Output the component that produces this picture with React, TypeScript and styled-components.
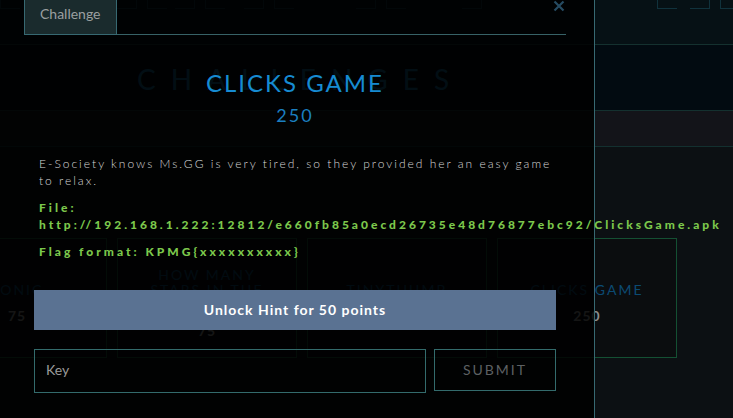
import React from 'react';
import styled, { createGlobalStyle } from 'styled-components';

const GlobalStyle = createGlobalStyle`
  * { box-sizing: border-box; }
  body {
    margin: 0;
    background: #0c1013;
    font-family: Lato, "Liberation Sans", sans-serif;
    overflow: hidden;
  }
`;

const Screen = styled.div`
  position: relative;
  min-height: 100vh;
  overflow: hidden;
`;

const Header = styled.header`
  height: 45px;
  background: #061115;
  border-bottom: 1px solid #14312f;
`;

const Nav = styled.nav`
  display: flex;
  gap: 10px;
  height: 9px;
`;

const NavFrame = styled.span<{ $width: number; $push?: boolean }>`
  flex: 0 0 ${p => p.$width}px;
  margin-left: ${p => (p.$push ? 'auto' : '0')};
  border: solid #10323c;
  border-width: 0 1px;
  background:
    linear-gradient(#10323c, #10323c) left bottom / 19px 1px no-repeat,
    linear-gradient(#10323c, #10323c) right bottom / 19px 1px no-repeat;
`;

const NavEnd = styled(NavFrame)`
  margin-right: -40px;
`;

const TitleBand = styled.div`
  display: flex;
  height: 66px;
  align-items: center;
  padding: 3px 0 0 137px;
  background: #020b11;
  border-bottom: 1px solid #14312f;
`;

const PageTitle = styled.h1`
  margin: 0;
  color: #126088;
  font-size: 28px;
  font-weight: 400;
  line-height: 32px;
  letter-spacing: 15px;
`;

const Strip = styled.div`
  height: 36px;
  background: #131419;
  border-bottom: 1px solid #13302f;
`;

const Cards = styled.main`
  display: grid;
  grid-template-columns: repeat(4, 180px);
  gap: 10px;
  justify-content: end;
  padding: 91px 56px 60px 0;
`;

const Card = styled.article`
  display: flex;
  height: 120px;
  flex-direction: column;
  align-items: center;
  justify-content: center;
  gap: 10px;
  padding: 10px 20px 0;
  border: 1px solid #145033;
  background: #0b0d0f;
  text-align: center;
`;

const CardName = styled.h3`
  margin: 0;
  color: #0b4a72;
  font-size: 14px;
  font-weight: 400;
  line-height: 15px;
  letter-spacing: 2px;
  white-space: pre-line;
`;

const CardPoints = styled.strong`
  min-height: 17px;
  color: #8a8c8d;
  font-size: 14px;
  line-height: 17px;
  letter-spacing: 1px;
`;

const Dialog = styled.section`
  position: absolute;
  inset: 0 138px 0 0;
  padding: 0 38px 0 34px;
  border-right: 1px solid #376972;
  background: rgba(0, 0, 0, 0.85);
`;

const TabBar = styled.div`
  display: flex;
  height: 35px;
  margin: 0 -10px;
  border-bottom: 1px solid #376267;
`;

const Tab = styled.button`
  height: 35px;
  padding: 0 15px 6px;
  border: solid #376972;
  border-width: 0 1px 1px;
  background: #1a2b2d;
  color: #9a9fa0;
  font: 14px/20px Lato, sans-serif;
`;

const Close = styled.button`
  position: absolute;
  top: 0;
  right: 28px;
  display: flex;
  width: 14px;
  height: 12px;
  align-items: center;
  justify-content: center;
  padding: 0;
  border: 0;
  background: none;
`;

const Name = styled.h2`
  margin: 33px 0 0;
  color: #168bd2;
  font-size: 24px;
  font-weight: 400;
  line-height: 30px;
  letter-spacing: 2px;
  text-align: center;
`;

const Value = styled.h4`
  margin: 6px 0 0;
  color: #1b7fc0;
  font-size: 18px;
  font-weight: 400;
  line-height: 22px;
  letter-spacing: 2px;
  text-align: center;
`;

const Description = styled.div`
  margin: 29px 0 0 5px;
  color: #d8d8d8;
  font-size: 12px;
  font-weight: 300;
  line-height: 17px;
  letter-spacing: 2px;
`;

const Paragraph = styled.p`
  margin: 0 0 10px;
`;

const Download = styled.a`
  color: #7cc84c;
  font-weight: 900;
  letter-spacing: 3px;
  text-decoration: none;
  white-space: nowrap;
`;

const Flag = styled.strong`
  color: #7cc84c;
  font-weight: 900;
  letter-spacing: 3px;
`;

const Hint = styled.button`
  width: 100%;
  height: 40px;
  margin-top: 20px;
  border: 0;
  background: #5a7292;
  color: #fff;
  font: 700 14px/20px Lato, sans-serif;
  letter-spacing: 1px;
`;

const Form = styled.form`
  display: flex;
  gap: 8px;
  align-items: flex-start;
  margin-top: 19px;
`;

const KeyInput = styled.input`
  flex: 1;
  min-width: 0;
  height: 44px;
  padding: 0 11px 3px;
  border: 1px solid #336b6c;
  background: transparent;
  color: #9a9a9a;
  font: 14px/20px Lato, sans-serif;
  &::placeholder { color: #9a9a9a; opacity: 1; }
`;

const Submit = styled.button`
  width: 122px;
  height: 42px;
  border: 1px solid #336b6c;
  background: transparent;
  color: #5d6062;
  font: 14px/20px Lato, sans-serif;
  letter-spacing: 2px;
`;

const cards = [
  { name: 'SONIC', points: '75' },
  { name: 'HOW MANY\nSTARS IN THE\n\u00a0', points: '75' },
  { name: 'TINYTHUMB', points: '' },
  { name: 'CLICKS GAME', points: '250' },
];

export default function App() {
  return (
    <>
      <GlobalStyle />
      <Screen>
        <Header>
          <Nav aria-label="Main">
            <NavFrame $width={137} />
            <NavFrame $width={48} />
            <NavFrame $width={59} />
            <NavFrame $width={102} />
            <NavFrame $width={96} />
            <NavFrame $width={53} $push />
            <NavEnd $width={53} />
          </Nav>
        </Header>
        <TitleBand>
          <PageTitle>CHALLENGES</PageTitle>
        </TitleBand>
        <Strip />
        <Cards>
          {cards.map(card => (
            <Card key={card.name}>
              <CardName>{card.name}</CardName>
              <CardPoints>{card.points}</CardPoints>
            </Card>
          ))}
        </Cards>
        <Dialog role="dialog" aria-label="Clicks Game">
          <TabBar role="tablist">
            <Tab type="button" role="tab" aria-selected="true">Challenge</Tab>
          </TabBar>
          <Close type="button" aria-label="Close">
            <svg width="12" height="12" viewBox="0 0 12 12">
              <path d="M1.5 1.5l9 9M10.5 1.5l-9 9" stroke="#264b62" strokeWidth="2.2" />
            </svg>
          </Close>
          <Name>CLICKS GAME</Name>
          <Value>250</Value>
          <Description>
            <Paragraph>
              E-Society knows Ms.GG is very tired, so they provided her an easy game to relax.
            </Paragraph>
            <Paragraph>
              <Download href="http://192.168.1.222:12812/e660fb85a0ecd26735e48d76877ebc92/ClicksGame.apk">
                File:<br />
                http://192.168.1.222:12812/e660fb85a0ecd26735e48d76877ebc92/ClicksGame.apk
              </Download>
            </Paragraph>
            <Paragraph>
              <Flag>{'Flag format: KPMG{xxxxxxxxxx}'}</Flag>
            </Paragraph>
          </Description>
          <Hint type="button">Unlock Hint for 50 points</Hint>
          <Form onSubmit={e => e.preventDefault()}>
            <KeyInput type="text" aria-label="Key" placeholder="Key" />
            <Submit type="submit">SUBMIT</Submit>
          </Form>
        </Dialog>
      </Screen>
    </>
  );
}
